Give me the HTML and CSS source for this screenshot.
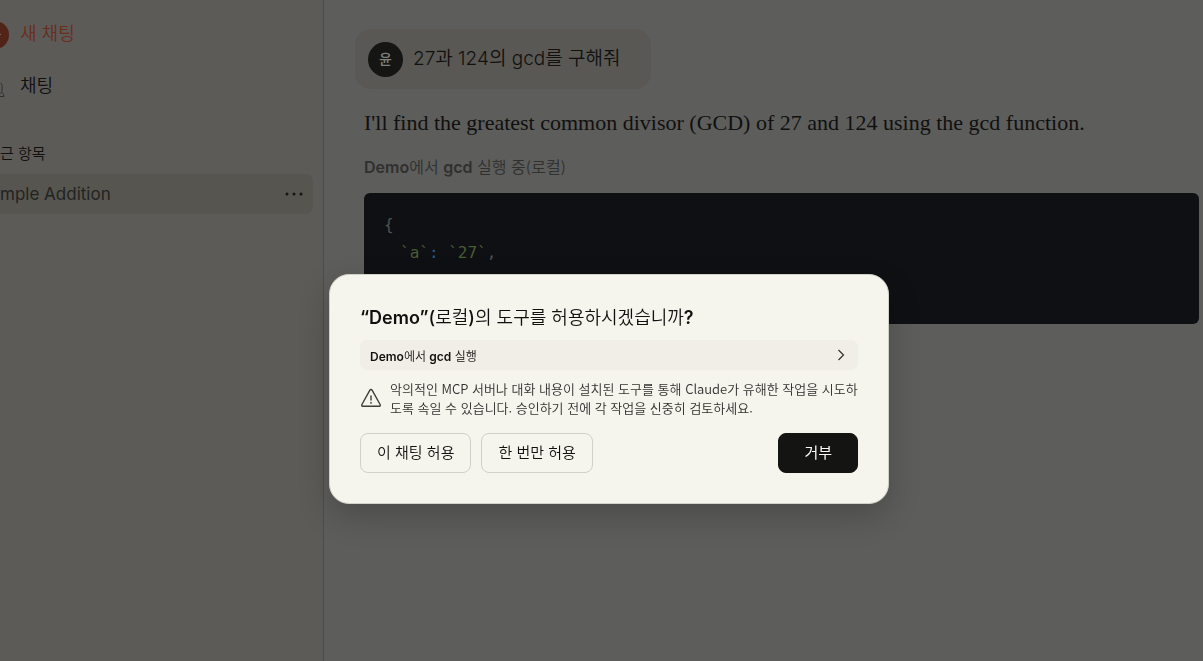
FILE: index.html
```html
<!DOCTYPE html>
<html lang="ko">
<head>
<meta charset="utf-8">
<meta name="viewport" content="width=device-width, initial-scale=1">
<title>gcd</title>
<link rel="stylesheet" href="styles.css">
</head>
<body>
<div class="app">
  <aside class="sidebar">
    <nav class="menu">
      <a class="menu-item menu-item-new" href="#">
        <svg class="menu-icon" viewBox="0 0 10 30" aria-hidden="true"><circle cx="-5" cy="16" r="14" fill="#522417"/><path d="M-10 15.500h11" stroke="#7c6a62" stroke-width="1"/></svg>
        <span>새 채팅</span>
      </a>
      <a class="menu-item" href="#">
        <svg class="menu-icon" viewBox="0 0 10 30" aria-hidden="true"><path d="M0 11.500C2 13 2.500 15 2 18c-.2 2-.4 3.500 1 4.500L4 25.500H0M0 22.500l1.500-1" fill="none" stroke="#30302f" stroke-width="1"/></svg>
        <span>채팅</span>
      </a>
    </nav>
    <h2 class="recent-title">근 항목</h2>
    <div class="recent-row">
      <a class="recent-link" href="#">mple Addition</a>
      <button class="more" type="button" aria-label="더 보기">
        <svg viewBox="0 0 18 6" aria-hidden="true"><circle cx="2" cy="3" r="1.500"/><circle cx="9" cy="3" r="1.500"/><circle cx="16" cy="3" r="1.500"/></svg>
      </button>
    </div>
  </aside>
  <main class="chat">
    <div class="bubble">
      <span class="avatar">윤</span>
      <p class="question">27과 124의 gcd를 구해줘</p>
    </div>
    <div class="answer">
      <p class="answer-text">I'll find the greatest common divisor (GCD) of 27 and 124 using the gcd function.</p>
      <p class="tool-status"><b>Demo</b>에서 <b>gcd</b> 실행 중(로컬)</p>
      <div class="code">
        <code class="code-line">{</code>
        <code class="code-line code-indent"><span class="str">`a`</span><span class="op">:</span> <span class="str">`27`</span>,</code>
      </div>
    </div>
  </main>
</div>
<div class="overlay">
  <section class="dialog" role="dialog" aria-modal="true" aria-labelledby="dialog-title">
    <h1 class="dialog-title" id="dialog-title"><b>“Demo”</b><span class="paren">(</span>로컬<span class="paren">)</span>의 도구를 허용하시겠습니까<b>?</b></h1>
    <button class="tool-row" type="button">
      <span class="tool-name"><b>Demo</b>에서 <b>gcd</b> 실행</span>
      <svg class="chevron" viewBox="0 0 8 12" aria-hidden="true"><path d="M1.500 1l5 5-5 5"/></svg>
    </button>
    <div class="warning">
      <svg class="warning-icon" viewBox="0 0 22 20" aria-hidden="true"><path d="M9.900 2.200 1.900 16.500c-.5 1 .1 1.800 1.100 1.800h16c1 0 1.600-.8 1.100-1.800L12.100 2.200c-.5-.9-1.700-.9-2.200 0z"/><path d="M11 8v4M11 14.500v.8"/></svg>
      <p class="warning-text">악의적인 MCP 서버나 대화 내용이 설치된 도구를 통해 Claude가 유해한 작업을 시도하도록 속일 수 있습니다. 승인하기 전에 각 작업을 신중히 검토하세요.</p>
    </div>
    <div class="actions">
      <button class="btn" type="button">이 채팅 허용</button>
      <button class="btn" type="button">한 번만 허용</button>
      <button class="btn btn-deny" type="button">거부</button>
    </div>
  </section>
</div>
</body>
</html>
```

FILE: styles.css
```css
* { box-sizing: border-box; }

body {
  margin: 0;
  background: #5d5d5b;
  color: #10100f;
  font-family: Inter, "Noto Sans CJK KR", sans-serif;
  font-weight: 350;
  overflow: hidden;
}

h1, h2, p { margin: 0; font-weight: inherit; }
a { color: inherit; text-decoration: none; }
button { font: inherit; color: inherit; border: 0; background: none; padding: 0; cursor: pointer; }
b { font-weight: 600; }

.app { display: flex; min-height: 100vh; }

.sidebar {
  flex: 0 0 324px;
  padding: 19px 10px 0 0;
  border-right: 1px solid #4d4d48;
  background: #5c5b58;
}

.menu { display: flex; flex-direction: column; gap: 22px; }
.menu-item { display: flex; align-items: center; gap: 10px; height: 30px; font-size: 18px; line-height: 30px; }
.menu-item-new { color: #6a2d1c; }
.menu-icon { width: 10px; height: 30px; }

.recent-title { margin-top: 42px; font-size: 15px; line-height: 22px; }
.recent-row {
  display: flex;
  align-items: center;
  justify-content: space-between;
  margin-top: 9px;
  height: 40px;
  padding-right: 10px;
  border-radius: 0 8px 8px 0;
  background: #565550;
}
.recent-link { font-size: 17px; font-weight: 400; color: #232321; }
.more { display: flex; }
.more svg { width: 18px; height: 6px; fill: #151514; }

.chat { flex: 1; min-width: 0; padding: 29px 4px 0 31px; }
.bubble {
  display: inline-flex;
  align-items: center;
  gap: 10px;
  height: 60px;
  padding: 0 30px 0 13px;
  border-radius: 16px;
  background: #5a5854;
}
.avatar {
  display: grid;
  place-items: center;
  width: 35px;
  height: 35px;
  padding-bottom: 2px;
  border-radius: 50%;
  background: #151513;
  color: #7f7f7b;
  font-size: 14px;
  font-weight: 500;
}
.question { font-size: 19px; line-height: 28px; }

.answer { padding: 18px 0 0 9px; }
.answer-text { font-family: "Liberation Serif", serif; font-size: 22px; font-weight: 400; line-height: 32px; }
.tool-status { margin-top: 16px; font-size: 16px; line-height: 24px; color: #30302f; }
.code {
  min-height: 131px;
  margin-top: 14px;
  padding: 18px 20px;
  border-radius: 6px;
  background: #0f1013;
  color: #505154;
}
.code-line { display: block; font: 400 16px/28px "DejaVu Sans Mono", monospace; }
.code-indent { padding-left: 16px; }
.str { color: #485c34; }
.op { color: #285a84; }

.overlay {
  position: fixed;
  inset: 0;
  display: grid;
  place-items: center;
  padding: 117px 0 0 15px;
}
.dialog {
  width: 560px;
  max-width: 100%;
  padding: 28px 30px 30px;
  border: 1px solid #d1d1c7;
  border-radius: 20px;
  background: #f5f4ed;
  box-shadow: 0 12px 32px rgba(0, 0, 0, 0.2);
}
.dialog-title { font-size: 18px; line-height: 30px; }
.paren { font-weight: 500; }
.tool-row {
  display: flex;
  align-items: center;
  justify-content: space-between;
  width: 100%;
  height: 30px;
  margin-top: 7px;
  padding: 0 13px 0 10px;
  border-radius: 7px;
  background: #f0eee6;
  font-size: 12px;
}
.chevron { width: 8px; height: 12px; fill: none; stroke: #30302f; stroke-width: 1.2; }
.warning { display: flex; align-items: center; gap: 8px; margin-top: 9px; color: #30302f; }
.warning-icon { flex: none; width: 22px; height: 20px; fill: none; stroke: #3d3d3a; stroke-width: 1.4; stroke-linecap: round; }
.warning-text { font-family: "Noto Sans CJK KR", sans-serif; font-size: 13px; line-height: 19px; }
.actions { display: flex; gap: 10px; margin-top: 16px; }
.btn { height: 40px; padding: 0 16px 3px; border: 1px solid #d1d1c7; border-radius: 8px; font-size: 15px; }
.btn-deny { margin-left: auto; padding: 0 25px 3px; border-color: #141413; background: #141413; color: #faf9f5; font-weight: 400; }
```
